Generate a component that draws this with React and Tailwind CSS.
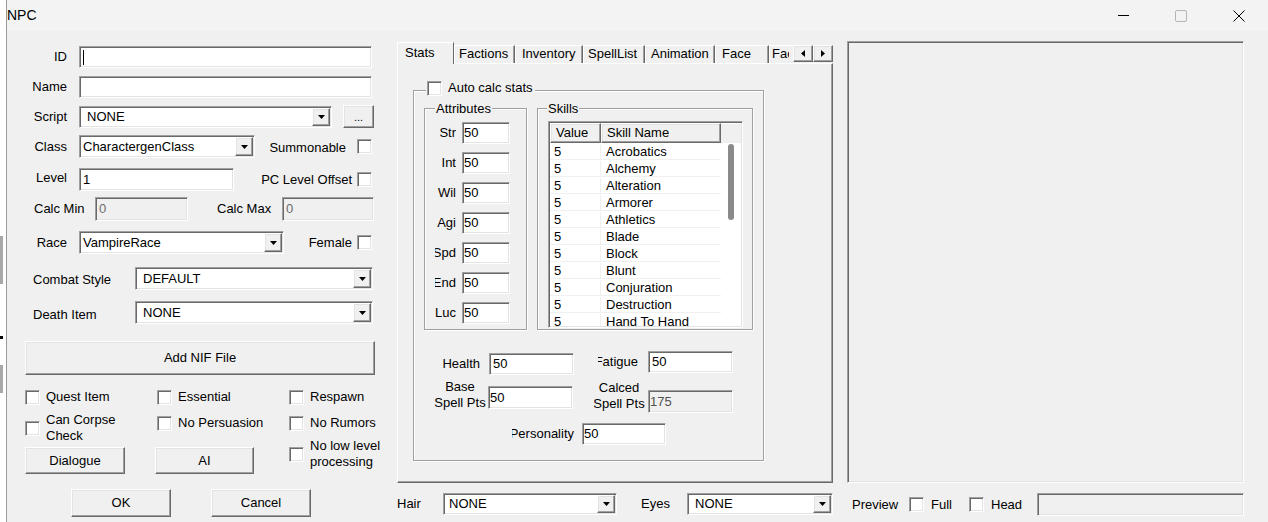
import React from "react";

const sunken =
  "border border-t-[#a0a0a0] border-l-[#a0a0a0] border-r-white border-b-white shadow-[inset_1px_1px_0_#696969,inset_-1px_-1px_0_#e3e3e3]";
const raised =
  "border border-t-white border-l-white border-r-[#696969] border-b-[#696969] shadow-[inset_-1px_-1px_0_#a0a0a0,inset_1px_1px_0_#e3e3e3]";
const etched = "border border-[#a0a0a0] shadow-[inset_1px_1px_0_#fff,1px_1px_0_#fff]";

function Field({ className = "", value = "", disabled = false, caret = false, pad = "pl-[3px]" }) {
  return (
    <div
      className={`${sunken} ${
        disabled ? "bg-[#f0f0f0] text-[#6d6d6d]" : "bg-white"
      } flex items-center ${pad} shrink-0 overflow-hidden whitespace-nowrap ${className}`}
    >
      {caret && <span className="w-px h-[15px] bg-black" />}
      {value}
    </div>
  );
}

function Check({ className = "" }) {
  return <div className={`${sunken} bg-white w-[15px] h-[15px] shrink-0 ${className}`} />;
}

function Btn({ className = "", children }) {
  return (
    <button
      type="button"
      className={`${raised} bg-[#f0f0f0] flex items-center justify-center shrink-0 ${className}`}
    >
      {children}
    </button>
  );
}

function Down() {
  return (
    <svg width="7" height="4" viewBox="0 0 7 4">
      <polygon points="0,0 7,0 3.5,4" fill="#000" />
    </svg>
  );
}

function Combo({ className = "", text, pad = "pl-[6px]" }) {
  return (
    <div className={`${sunken} bg-white flex p-px shrink-0 ${className}`}>
      <div className={`flex-1 flex items-center ${pad} whitespace-nowrap overflow-hidden`}>{text}</div>
      <div className={`${raised} bg-[#f0f0f0] w-[18px] flex items-center justify-center`}>
        <Down />
      </div>
    </div>
  );
}

function Sliver() {
  return (
    <div className="w-[6px] shrink-0 bg-white flex flex-col">
      <div className="mt-[236px] h-[48px] w-[3px] bg-[#a8a8a8]" />
      <div className="mt-[52px] h-[3px] w-[3px] bg-black" />
      <div className="mt-[26px] h-[28px] w-[3px] bg-[#a8a8a8]" />
    </div>
  );
}

function TitleBar() {
  return (
    <div className="h-[31px] bg-[#f3f3f3] flex items-center">
      <span className="text-[14px] -mt-px">NPC</span>
      <div className="ml-auto flex h-full">
        <div className="w-[58px] flex items-center justify-center">
          <svg width="11" height="11" viewBox="0 0 11 11">
            <line x1="0" y1="5.5" x2="11" y2="5.5" stroke="#000" strokeWidth="1" />
          </svg>
        </div>
        <div className="w-[58px] flex items-center justify-center">
          <svg width="12" height="12" viewBox="0 0 12 12">
            <rect x="0.5" y="0.5" width="11" height="11" rx="1.5" fill="none" stroke="#b5b5b5" />
          </svg>
        </div>
        <div className="w-[58px] flex items-center justify-center">
          <svg width="12" height="12" viewBox="0 0 12 12">
            <path d="M0.5 0.5 L11.5 11.5 M11.5 0.5 L0.5 11.5" stroke="#000" strokeWidth="1" />
          </svg>
        </div>
      </div>
    </div>
  );
}

function CheckItem({ className = "", children }) {
  return (
    <div className={`w-[132px] shrink-0 flex items-center gap-[6px] ${className}`}>
      <Check />
      <span>{children}</span>
    </div>
  );
}

function LeftCol() {
  return (
    <div className="w-[390px] shrink-0 flex flex-col">
      <div className="mt-[15px] h-[22px] flex items-center">
        <span className="w-[60px] text-right">ID</span>
        <Field className="ml-[12px] w-[293px] h-[22px]" caret />
      </div>
      <div className="mt-[8px] h-[22px] flex items-center">
        <span className="w-[60px] text-right">Name</span>
        <Field className="ml-[12px] w-[293px] h-[22px]" />
      </div>
      <div className="mt-[7px] h-[23px] flex items-center">
        <span className="w-[60px] text-right">Script</span>
        <Combo className="ml-[12px] w-[253px] h-[22px]" text="NONE" />
        <Btn className="ml-[11px] w-[31px] h-[23px] text-[11px]">...</Btn>
      </div>
      <div className="mt-[7px] h-[23px] flex items-center">
        <span className="w-[60px] text-right">Class</span>
        <Combo className="ml-[12px] w-[176px] h-[23px]" text="CharactergenClass" pad="pl-[2px]" />
        <span className="ml-auto mr-[11px] mt-[2px]">Summonable</span>
        <Check className="mr-[25px]" />
      </div>
      <div className="mt-[10px] h-[23px] flex items-center">
        <span className="w-[60px] text-right -mt-[3px]">Level</span>
        <Field className="ml-[12px] w-[155px] h-[23px]" value="1" />
        <span className="ml-auto mr-[5px]">PC Level Offset</span>
        <Check className="mr-[25px]" />
      </div>
      <div className="mt-[6px] h-[24px] flex items-center">
        <span className="ml-[27px] w-[61px]">Calc Min</span>
        <Field className="w-[93px] h-[24px]" value="0" disabled />
        <span className="ml-[29px] w-[65px]">Calc Max</span>
        <Field className="w-[92px] h-[24px]" value="0" disabled />
      </div>
      <div className="mt-[10px] h-[23px] flex items-center">
        <span className="w-[60px] text-right">Race</span>
        <Combo className="ml-[12px] w-[205px] h-[23px]" text="VampireRace" pad="pl-[2px]" />
        <span className="ml-auto mr-[5px]">Female</span>
        <Check className="mr-[25px]" />
      </div>
      <div className="mt-[13px] h-[23px] flex items-center">
        <span className="ml-[26px] w-[102px] mt-[3px]">Combat Style</span>
        <Combo className="w-[238px] h-[23px]" text="DEFAULT" />
      </div>
      <div className="mt-[11px] h-[23px] flex items-center">
        <span className="ml-[26px] w-[102px] mt-[4px]">Death Item</span>
        <Combo className="w-[238px] h-[23px]" text="NONE" />
      </div>
      <Btn className="mt-[17px] ml-[18px] w-[350px] h-[34px]">Add NIF File</Btn>

      <div className="mt-[14px] ml-[18px] h-[16px] flex items-center">
        <CheckItem>Quest Item</CheckItem>
        <CheckItem>Essential</CheckItem>
        <CheckItem>Respawn</CheckItem>
      </div>
      <div className="mt-[7px] ml-[18px] h-[32px] flex items-start">
        <CheckItem className="h-[32px]">
          Can Corpse
          <br />
          Check
        </CheckItem>
        <CheckItem className="mt-[3px]">No Persuasion</CheckItem>
        <CheckItem className="mt-[3px]">No Rumors</CheckItem>
      </div>
      <div className="mt-[3px] ml-[18px] h-[28px] flex items-start">
        <Btn className="w-[100px] h-[27px]">Dialogue</Btn>
        <Btn className="ml-[30px] w-[99px] h-[27px]">AI</Btn>
        <CheckItem className="ml-[35px] -mt-[9px]">
          No low level
          <br />
          processing
        </CheckItem>
      </div>
      <div className="mt-[14px] h-[28px] flex">
        <Btn className="ml-[64px] w-[100px] h-[28px]">OK</Btn>
        <Btn className="ml-[40px] w-[100px] h-[28px]">Cancel</Btn>
      </div>
    </div>
  );
}

const tabs = [
  ["Factions", "w-[61px] pl-[4px]"],
  ["Inventory", "w-[68px] pl-[6px]"],
  ["SpellList", "w-[62px] pl-[4px]"],
  ["Animation", "w-[70px] pl-[5px]"],
  ["Face", "w-[54px] pl-[6px]"],
];

const skills = [
  "Acrobatics",
  "Alchemy",
  "Alteration",
  "Armorer",
  "Athletics",
  "Blade",
  "Block",
  "Blunt",
  "Conjuration",
  "Destruction",
  "Hand To Hand",
];

const attrs = ["Str", "Int", "Wil", "Agi", "Spd", "End", "Luc"];

function Arrow({ dir }) {
  return (
    <svg width="4" height="7" viewBox="0 0 4 7">
      <polygon points={dir === "l" ? "4,0 4,7 0,3.5" : "0,0 0,7 4,3.5"} fill="#000" />
    </svg>
  );
}

function MidCol() {
  return (
    <div className="w-[436px] shrink-0 flex flex-col">
      <div className="mt-[11px] h-[21px] flex items-end">
        <div className="relative z-10 -mb-px h-[22px] w-[57px] border-t border-l border-r border-t-white border-l-white border-r-[#696969] bg-[#f0f0f0] pl-[7px] pt-[2px]">
          Stats
        </div>
        {tabs.map(([t, c]) => (
          <div
            key={t}
            className={`h-[18px] border-t border-l border-r border-t-white border-l-white border-r-[#696969] shadow-[inset_-1px_0_0_#a0a0a0] whitespace-nowrap ${c}`}
          >
            {t}
          </div>
        ))}
        <div className="h-[18px] w-[24px] border-t border-l border-t-white border-l-white pl-[2px]">
          <div className="w-[17px] overflow-hidden whitespace-nowrap">Face</div>
        </div>
        <Btn className="self-start mt-[3px] w-[20px] h-[17px]">
          <Arrow dir="l" />
        </Btn>
        <Btn className="self-start mt-[3px] w-[20px] h-[17px]">
          <Arrow dir="r" />
        </Btn>
      </div>
      <div className="h-[420px] border border-t-white border-l-white border-r-[#696969] border-b-[#696969] shadow-[inset_-1px_-1px_0_#a0a0a0] flex flex-col">
        <div className={`${etched} mt-[26px] ml-[15px] w-[351px] h-[371px] flex flex-col`}>
          <div className="-mt-[11px] ml-[12px] self-start pl-px pr-[2px] bg-[#f0f0f0] h-[16px] flex items-center gap-[6px]">
            <Check />
            <span>Auto calc stats</span>
          </div>
          <div className="mt-[12px] ml-[10px] flex gap-[10px] h-[222px]">
            <div className={`${etched} w-[103px] h-[222px] flex flex-col`}>
              <span className="-mt-[8px] ml-[10px] self-start px-px bg-[#f0f0f0]">Attributes</span>
              <div className="mt-[5px] flex flex-col gap-[8px]">
                {attrs.map((a) => (
                  <div key={a} className="h-[22px] flex items-center">
                    <div className="ml-[10px] w-[21px] flex justify-end overflow-hidden whitespace-nowrap">
                      <span className="shrink-0">{a}</span>
                    </div>
                    <Field className="ml-[6px] w-[48px] h-[22px]" value="50" pad="pl-[1px]" />
                  </div>
                ))}
              </div>
            </div>
            <div className={`${etched} w-[216px] h-[222px] flex flex-col`}>
              <span className="-mt-[8px] ml-[9px] self-start px-px bg-[#f0f0f0]">Skills</span>
              <div className={`${sunken} mt-[4px] ml-[10px] w-[195px] h-[207px] bg-white p-px flex flex-col overflow-hidden`}>
                <div className="h-[20px] flex shrink-0">
                  <div className={`${raised} bg-[#f0f0f0] w-[51px] pl-[5px] flex items-center`}>Value</div>
                  <div className={`${raised} bg-[#f0f0f0] w-[120px] pl-[5px] flex items-center`}>Skill Name</div>
                  <div className="flex-1 bg-[#f0f0f0] border-t border-t-white" />
                </div>
                <div className="flex flex-1 overflow-hidden">
                  <div className="w-[171px] flex flex-col">
                    {skills.map((s) => (
                      <div key={s} className="h-[17px] shrink-0 flex pt-px border-b border-[#f0f0f0] whitespace-nowrap">
                        <div className="w-[51px] pl-[4px] border-r border-[#f0f0f0]">5</div>
                        <div className="pl-[5px]">{s}</div>
                      </div>
                    ))}
                  </div>
                  <div className="flex-1">
                    <div className="mt-px ml-[7px] w-[6px] h-[76px] bg-[#8a8a8a] rounded-[3px]" />
                  </div>
                </div>
              </div>
            </div>
          </div>

          <div className="mt-[21px] h-[24px] flex items-start">
            <div className="w-[66px] h-[22px] mt-[2px] flex items-center justify-end">Health</div>
            <Field className="ml-[9px] w-[85px] h-[22px] mt-[2px]" value="50" />
            <div className="ml-[24px] w-[40px] h-[22px] flex items-center justify-end overflow-hidden whitespace-nowrap">
              <span className="shrink-0">Fatigue</span>
            </div>
            <Field className="ml-[10px] w-[85px] h-[22px]" value="50" />
          </div>
          <div className="mt-[11px] h-[27px] flex items-start">
            <div className="ml-[19px] w-[54px] -mt-[7px] text-center">
              Base
              <br />
              Spell Pts
            </div>
            <Field className="ml-px w-[85px] h-[23px]" value="50" pad="pl-[1px]" />
            <div className="ml-[19px] w-[54px] -mt-[6px] text-center">
              Calced
              <br />
              Spell Pts
            </div>
            <Field className="ml-[2px] mt-[4px] w-[85px] h-[23px] text-[#505050]" value="175" disabled pad="pl-[1px]" />
          </div>
          <div className="mt-[10px] h-[22px] flex items-center">
            <div className="ml-[98px] w-[62px] flex justify-end overflow-hidden whitespace-nowrap">
              <span className="shrink-0">Personality</span>
            </div>
            <Field className="ml-[8px] w-[84px] h-[22px]" value="50" pad="pl-px" />
          </div>
        </div>
      </div>
      <div className="mt-[10px] h-[22px] flex items-center">
        <span className="w-[46px]">Hair</span>
        <Combo className="w-[174px] h-[22px]" text="NONE" pad="pl-[4px]" />
        <span className="ml-[24px] w-[46px]">Eyes</span>
        <Combo className="w-[146px] h-[22px]" text="NONE" />
      </div>
    </div>
  );
}

function RightCol() {
  return (
    <div className="ml-[14px] w-[397px] shrink-0 flex flex-col">
      <div className={`${sunken} mt-[10px] h-[442px] bg-[#f0f0f0]`} />
      <div className="mt-[10px] h-[23px] flex items-center">
        <span className="ml-[5px] w-[57px]">Preview</span>
        <Check />
        <span className="ml-[7px] w-[38px]">Full</span>
        <Check />
        <span className="ml-[7px] w-[46px]">Head</span>
        <Field className="w-[207px] h-[23px]" disabled />
      </div>
    </div>
  );
}

export default function App() {
  return (
    <div className="w-[1268px] h-[522px] flex overflow-hidden bg-white font-['Liberation_Sans',Arial,sans-serif] text-[13px] leading-[16px] text-black">
      <Sliver />
      <div className="flex-1 min-w-0 flex flex-col bg-[#f0f0f0] border-l border-[#9a9a9a]">
        <TitleBar />
        <div className="flex">
          <LeftCol />
          <MidCol />
          <RightCol />
        </div>
      </div>
    </div>
  );
}
